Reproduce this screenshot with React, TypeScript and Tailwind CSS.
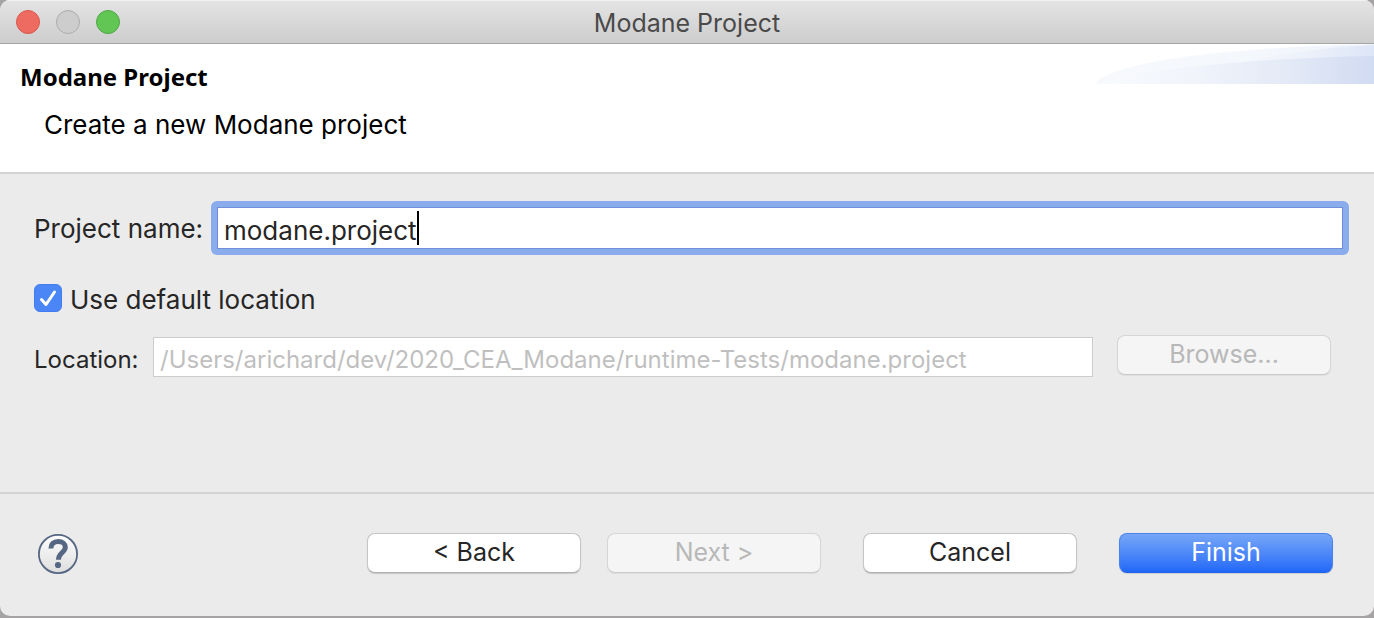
import { useState } from "react";
import type { ButtonHTMLAttributes } from "react";
import clsx from "clsx";

type PushButtonProps = ButtonHTMLAttributes<HTMLButtonElement> & {
  primary?: boolean;
};

function PushButton({ primary, disabled, className, ...rest }: PushButtonProps) {
  return (
    <button
      type="button"
      disabled={disabled}
      className={clsx(
        "h-10 w-[214px] rounded-lg border pb-0.5 text-center leading-8",
        primary &&
          "border-[#4a83ea] border-b-[#1f62ec] bg-linear-to-b from-[#77a6f7] to-[#2268f8] text-white shadow-[0_1px_1px_rgba(0,0,0,0.12)]",
        !primary &&
          !disabled &&
          "border-[#c6c6c6] border-b-[#b0b0b0] bg-white text-[#262626] shadow-[0_1px_1px_rgba(0,0,0,0.15)]",
        !primary &&
          disabled &&
          "border-[#d6d6d6] border-b-[#c9c9c9] bg-[#f5f5f5] text-[#b8b8b8] shadow-[0_1px_1px_rgba(0,0,0,0.06)]",
        className,
      )}
      {...rest}
    />
  );
}

function HeaderSwoosh() {
  return (
    <svg
      className="h-10 w-[280px] shrink-0"
      viewBox="0 0 280 40"
      preserveAspectRatio="none"
      aria-hidden="true"
    >
      <defs>
        <linearGradient id="swoosh-back" x1="0" x2="1">
          <stop offset="0" stopColor="#f7f9fd" />
          <stop offset="0.6" stopColor="#f4f7fc" />
          <stop offset="1" stopColor="#eef3fb" />
        </linearGradient>
        <linearGradient id="swoosh-mid" x1="0" x2="1">
          <stop offset="0" stopColor="#f4f7fc" />
          <stop offset="0.5" stopColor="#eef2fa" />
          <stop offset="1" stopColor="#dde6f7" />
        </linearGradient>
        <linearGradient id="swoosh-front" x1="0" x2="1">
          <stop offset="0" stopColor="#f9fbfe" />
          <stop offset="0.35" stopColor="#f1f4fb" />
          <stop offset="0.7" stopColor="#e3e9f6" />
          <stop offset="1" stopColor="#d1dbf2" />
        </linearGradient>
      </defs>
      <path d="M0 40C22 17 124 4 280 0V40Z" fill="url(#swoosh-back)" />
      <path d="M130 22C180 10 235 3 280 1V40H130Z" fill="url(#swoosh-mid)" />
      <path d="M0 40C50 25 160 14 280 12V40Z" fill="url(#swoosh-front)" />
    </svg>
  );
}

function HelpIcon() {
  return (
    <svg className="size-10" viewBox="0 0 40 40" aria-hidden="true">
      <defs>
        <linearGradient id="help-fill" x1="0" y1="0" x2="0" y2="1">
          <stop offset="0" stopColor="#fdfdfd" />
          <stop offset="1" stopColor="#dedede" />
        </linearGradient>
      </defs>
      <circle cx="20" cy="20" r="19.1" fill="url(#help-fill)" stroke="#566784" strokeWidth="1.8" />
      <path
        d="M12.9 14.4C12.9 10.2 15.6 7.6 20.2 7.6C24.6 7.6 27.3 9.8 27.3 13.2C27.3 18.6 20.4 18.6 20.4 25.8"
        fill="none"
        stroke="#566784"
        strokeWidth="5"
      />
      <circle cx="20" cy="31" r="3.1" fill="#566784" />
    </svg>
  );
}

export default function App() {
  const [name, setName] = useState("modane.project");
  const [useDefault, setUseDefault] = useState(true);

  return (
    <div className="flex min-h-screen flex-col bg-[#a5a3a4] pb-0.5 font-['Inter','Liberation_Sans',sans-serif] text-[25px] leading-8 text-[#262626]">
      <div className="flex flex-1 flex-col overflow-hidden rounded-[10px] bg-[#ebebeb]">
        <header className="grid h-11 grid-cols-[1fr_auto_1fr] items-center border-b border-[#a6a6a6] bg-linear-to-b from-[#e4e4e4] to-[#cdcdcd] px-4 shadow-[inset_0_1px_0_#f2f2f2]">
          <div className="flex gap-4">
            <button type="button" aria-label="Close" className="size-6 rounded-full border border-[#d9574c] bg-[#ed6b60]" />
            <button type="button" aria-label="Minimize" disabled className="size-6 rounded-full border border-[#acacac] bg-[#cdcdcd]" />
            <button type="button" aria-label="Zoom" className="size-6 rounded-full border border-[#4fa844] bg-[#62c655]" />
          </div>
          <h1 className="pt-0.5 text-[#4a4a4a]">Modane Project</h1>
        </header>

        <section className="flex items-start justify-between border-b-2 border-[#d3d3d3] bg-white text-black">
          <div className="pt-[17px] pb-[31px] pl-5">
            <h2 className="font-['Noto_Sans','Open_Sans',sans-serif] text-2xl leading-8 font-bold">Modane Project</h2>
            <p className="mt-4 pl-6 text-[26px] leading-8">Create a new Modane project</p>
          </div>
          <HeaderSwoosh />
        </section>

        <main className="flex-1 pt-[27px] pr-[25px] pl-[34px]">
          <div className="flex items-center">
            <label htmlFor="project-name" className="w-[177px] shrink-0 pt-0.5 text-[26px] leading-8">
              Project name:
            </label>
            <div className="min-w-0 flex-1 rounded-md bg-[#8aabec] p-1.5">
              <div className="flex h-[42px] items-center border border-[#6d90d8] bg-white pl-1.5">
                <input
                  id="project-name"
                  type="text"
                  value={name}
                  onChange={(event) => setName(event.target.value)}
                  className="field-sizing-content h-10 max-w-full pt-1 text-[26px] caret-transparent outline-none"
                />
                <span className="h-[34px] w-0.5 bg-black" />
              </div>
            </div>
          </div>

          <div className="mt-7 flex items-start gap-2">
            <span className="mt-px grid size-7 place-items-center">
              <input
                id="use-default"
                type="checkbox"
                checked={useDefault}
                onChange={(event) => setUseDefault(event.target.checked)}
                className="peer col-start-1 row-start-1 size-7 appearance-none rounded-md border border-[#c0c0c0] bg-white checked:border-[#447cf0] checked:bg-[#4a86f6]"
              />
              <svg
                className="pointer-events-none invisible col-start-1 row-start-1 size-7 peer-checked:visible"
                viewBox="0 0 28 28"
                aria-hidden="true"
              >
                <path
                  d="M7.5 15.5L12 20.5L20.5 8"
                  fill="none"
                  stroke="white"
                  strokeWidth="3"
                  strokeLinecap="round"
                  strokeLinejoin="round"
                />
              </svg>
            </span>
            <label htmlFor="use-default" className="pt-px text-[26px] leading-8">
              Use default location
            </label>
          </div>

          <div className="mt-[19px] mr-[18px] flex items-start">
            <label htmlFor="location" className="w-[119px] shrink-0 pt-[9px] text-2xl leading-8">
              Location:
            </label>
            <input
              id="location"
              type="text"
              disabled={useDefault}
              defaultValue="/Users/arichard/dev/2020_CEA_Modane/runtime-Tests/modane.project"
              className="mt-0.5 mr-6 h-10 min-w-0 flex-1 border border-[#cccccc] bg-white px-1.5 pt-1 text-2xl disabled:text-[#bfbfbf]"
            />
            <PushButton disabled={useDefault}>Browse...</PushButton>
          </div>
        </main>

        <footer className="flex items-start border-t-2 border-[#d3d3d3] pt-[39px] pr-[41px] pb-[42px] pl-[38px]">
          <button type="button" aria-label="Help" className="mr-auto pt-px">
            <HelpIcon />
          </button>
          <div className="flex gap-[42px]">
            <div className="flex gap-[26px]">
              <PushButton>&lt; Back</PushButton>
              <PushButton disabled>Next &gt;</PushButton>
            </div>
            <PushButton>Cancel</PushButton>
            <PushButton primary>Finish</PushButton>
          </div>
        </footer>
      </div>
    </div>
  );
}
